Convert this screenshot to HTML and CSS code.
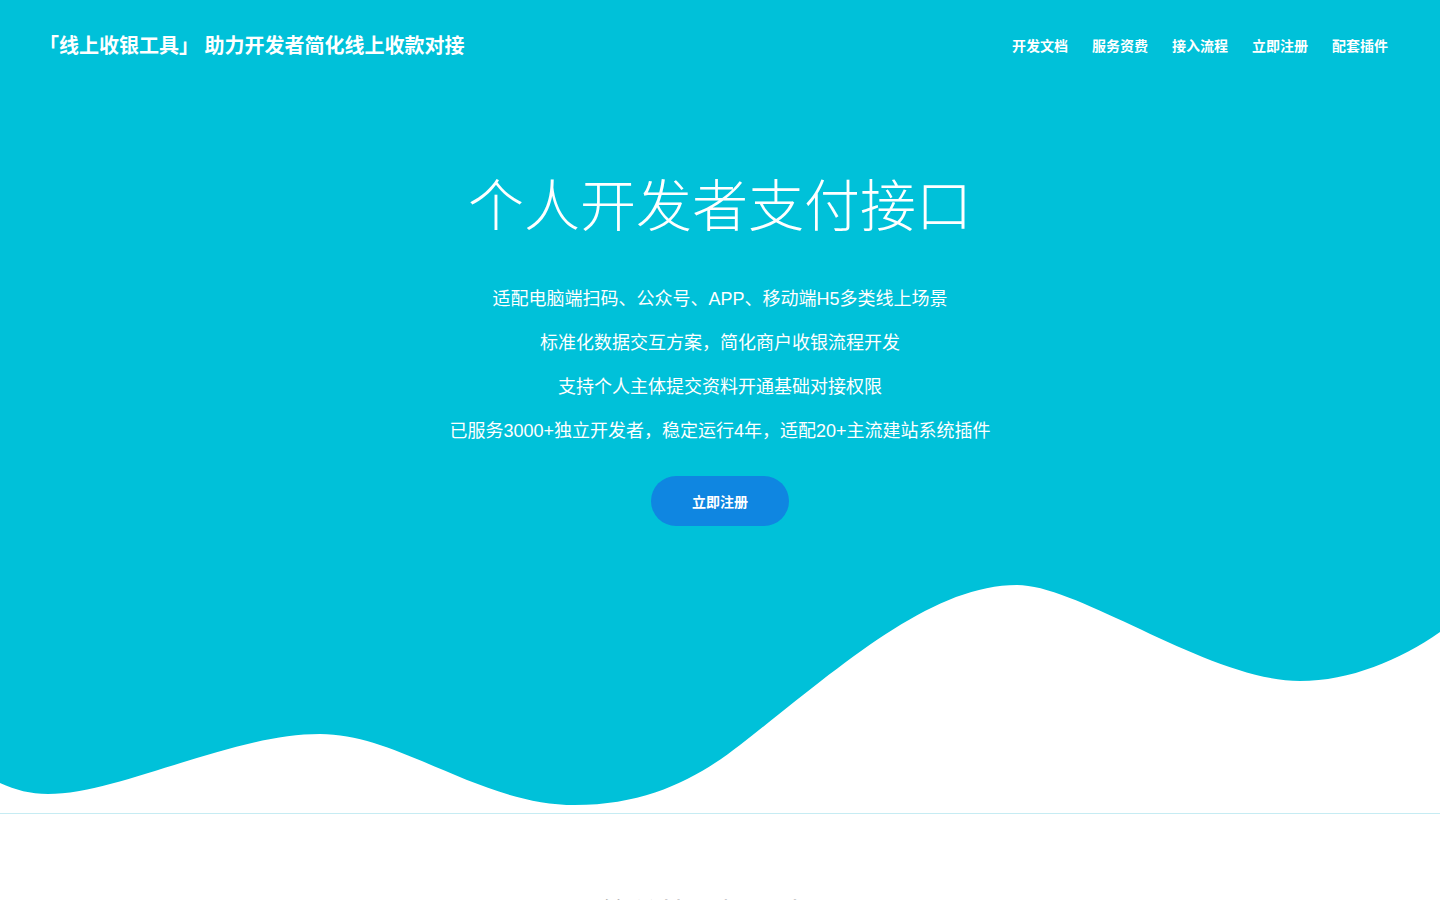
FILE: index.html
```html
<!DOCTYPE html>
<html lang="zh-CN">
<head>
<meta charset="utf-8">
<title>线上收银工具</title>
<link rel="stylesheet" href="styles.css">
</head>
<body>
<section class="hero">
  <header class="header">
    <div class="brand">「线上收银工具」 助力开发者简化线上收款对接</div>
    <nav class="nav">
      <a href="#">开发文档</a>
      <a href="#">服务资费</a>
      <a href="#">接入流程</a>
      <a href="#">立即注册</a>
      <a href="#">配套插件</a>
    </nav>
  </header>
  <div class="hero-body">
    <h1 class="hero-title">个人开发者支付接口</h1>
    <div class="hero-lines">
      <p>适配电脑端扫码、公众号、APP、移动端H5多类线上场景</p>
      <p>标准化数据交互方案，简化商户收银流程开发</p>
      <p>支持个人主体提交资料开通基础对接权限</p>
      <p>已服务3000+独立开发者，稳定运行4年，适配20+主流建站系统插件</p>
    </div>
    <a class="btn" href="#">立即注册</a>
  </div>
  <svg class="wave" viewBox="0 0 1440 233" preserveAspectRatio="none" aria-hidden="true">
    <path fill="#ffffff" d="M0,203 C16,210 30,214 48,214 C120,214 230,154 320,154 C400,154 480,225 575,225 C650,225 700,196 740,165 C840,87 930,5 1017,5 C1080,5 1210,101 1300,101 C1350,101 1400,80 1440,52 L1440,233 L0,233 Z"/>
  </svg>
</section>
<section class="features">
  <h2 class="section-title">简单快速接入支付</h2>
</section>
</body>
</html>
```

FILE: styles.css
```css
* { box-sizing: border-box; }
html, body { margin: 0; padding: 0; }
body {
  font-family: "Liberation Sans", Arial, "Noto Sans CJK SC", sans-serif;
  background: #ffffff;
  color: #333333;
}
.hero {
  background: #00c1d9;
  border-bottom: 1px solid #c6ecf3;
}
.header {
  height: 90px;
  display: flex;
  align-items: center;
  justify-content: space-between;
  padding: 1px 52px 0 39px;
}
.brand {
  color: #ffffff;
  font-size: 20px;
  font-weight: 700;
  line-height: 1;
  white-space: pre;
}
.nav {
  display: flex;
  gap: 24px;
}
.nav a {
  color: #ffffff;
  text-decoration: none;
  font-size: 14px;
  font-weight: 700;
  line-height: 1;
}
.hero-body {
  display: flex;
  flex-direction: column;
  align-items: center;
  text-align: center;
  padding-top: 89px;
}
.hero-title {
  margin: 0;
  color: #ffffff;
  font-size: 56px;
  font-weight: 300;
  line-height: 56px;
}
.hero-lines {
  margin-top: 42px;
}
.hero-lines p {
  margin: 0;
  color: #ffffff;
  font-size: 18px;
  line-height: 44px;
}
.btn {
  margin-top: 23px;
  width: 138px;
  height: 50px;
  border-radius: 25px;
  background: #0f86e1;
  color: #ffffff;
  text-decoration: none;
  font-size: 14px;
  font-weight: 700;
  display: flex;
  align-items: center;
  justify-content: center;
}
.wave {
  display: block;
  width: 100%;
  height: 233px;
  margin-top: 54px;
}
.features {
  padding-top: 83px;
  text-align: center;
}
.section-title {
  margin: 0;
  font-size: 30px;
  font-weight: 400;
  line-height: 36px;
  color: #333333;
}
```
